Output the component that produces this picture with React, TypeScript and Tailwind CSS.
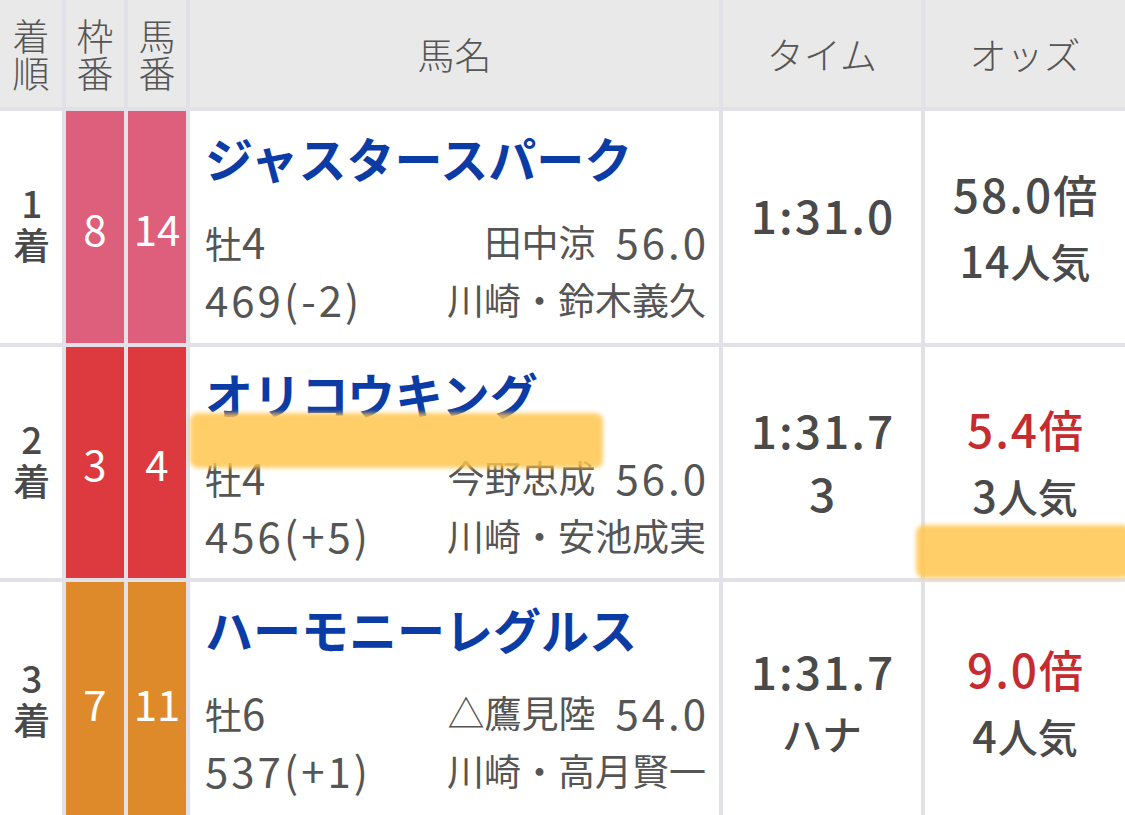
import React from "react";

interface RaceRow {
  rank: string;
  waku: string;
  uma: string;
  frame: string;
  name: string;
  sex: string;
  jockey: string;
  kinryo: string;
  weight: string;
  trainer: string;
  time: string;
  diff: string;
  odds: string;
  pop: string;
  hot: boolean;
}

const rows: RaceRow[] = [
  {
    rank: "1",
    waku: "8",
    uma: "14",
    frame: "bg-[#dd5f7b]",
    name: "ジャスタースパーク",
    sex: "牡4",
    jockey: "田中涼",
    kinryo: "56.0",
    weight: "469(-2)",
    trainer: "川崎・鈴木義久",
    time: "1:31.0",
    diff: "",
    odds: "58.0倍",
    pop: "14人気",
    hot: false,
  },
  {
    rank: "2",
    waku: "3",
    uma: "4",
    frame: "bg-[#dc3a3e]",
    name: "オリコウキング",
    sex: "牡4",
    jockey: "今野忠成",
    kinryo: "56.0",
    weight: "456(+5)",
    trainer: "川崎・安池成実",
    time: "1:31.7",
    diff: "3",
    odds: "5.4倍",
    pop: "3人気",
    hot: true,
  },
  {
    rank: "3",
    waku: "7",
    uma: "11",
    frame: "bg-[#de8a2b]",
    name: "ハーモニーレグルス",
    sex: "牡6",
    jockey: "△鷹見陸",
    kinryo: "54.0",
    weight: "537(+1)",
    trainer: "川崎・高月賢一",
    time: "1:31.7",
    diff: "ハナ",
    odds: "9.0倍",
    pop: "4人気",
    hot: true,
  },
];

// 数字部分だけ少し大きく・広めに（ヒラギノの数字幅に寄せる）
function Mixed({ text, numClass }: { text: string; numClass: string }) {
  const parts = text.split(/([0-9().:+\-]+)/).filter((p) => p !== "");
  return (
    <>
      {parts.map((p, i) =>
        /^[0-9().:+\-]+$/.test(p) ? (
          <span key={i} className={numClass}>
            {p}
          </span>
        ) : (
          <span key={i}>{p}</span>
        ),
      )}
    </>
  );
}

function HeadCell({ children }: { children: React.ReactNode }) {
  return (
    <div className="bg-[#e9e9e9] flex items-center justify-center text-[37px] leading-[38px] text-[#555] font-light">
      {children}
    </div>
  );
}

export default function App() {
  return (
    <div className="relative w-[1125px] h-[815px] overflow-hidden bg-white font-['Noto_Sans_CJK_JP',sans-serif]">
      <div className="grid grid-cols-[62px_58px_58px_529px_198px_1fr] grid-rows-[107px_232px_231px_240px] gap-[4px] bg-[#e2e1e7]">
        <HeadCell>
          <span className="[writing-mode:vertical-rl] mt-[3px]">着順</span>
        </HeadCell>
        <HeadCell>
          <span className="[writing-mode:vertical-rl] mt-[3px]">枠番</span>
        </HeadCell>
        <HeadCell>
          <span className="[writing-mode:vertical-rl] mt-[3px]">馬番</span>
        </HeadCell>
        <HeadCell>馬名</HeadCell>
        <HeadCell>タイム</HeadCell>
        <HeadCell>オッズ</HeadCell>

        {rows.map((r) => (
          <React.Fragment key={r.rank}>
            <div className="bg-white flex items-center justify-center text-[37px] font-medium text-[#4a4a4a]">
              <span className="[writing-mode:vertical-rl] [text-orientation:upright] tracking-[5px]">
                {r.rank}着
              </span>
            </div>
            <div className={`${r.frame} flex items-center justify-center text-[42px] text-white`}>
              {r.waku}
            </div>
            <div className={`${r.frame} flex items-center justify-center text-[42px] text-white`}>
              {r.uma}
            </div>
            <div className="bg-white pt-[18px] pl-[15px] pr-[13px]">
              <div className="text-[48px] leading-[56px] font-bold text-[#0b3ca6] whitespace-nowrap">
                {r.name}
              </div>
              <div className="mt-[28px] text-[37px] leading-[56px] text-[#555]">
                <div className="flex justify-between">
                  <span>
                    <Mixed text={r.sex} numClass="text-[42px] tracking-[3px]" />
                  </span>
                  <span className="-mr-[3px] flex gap-[20px]">
                    <span>{r.jockey}</span>
                    <span className="text-[42px] tracking-[3px]">{r.kinryo}</span>
                  </span>
                </div>
                <div className="flex justify-between">
                  <span>
                    <Mixed text={r.weight} numClass="text-[42px] tracking-[3px]" />
                  </span>
                  <span>{r.trainer}</span>
                </div>
              </div>
            </div>
            <div className="bg-white flex flex-col items-center justify-center leading-[63px] font-medium text-[#4a4a4a]">
              <span className="text-[46px] tracking-[2px] -mr-[2px]">{r.time}</span>
              {r.diff ? (
                <span className="text-[40px]">
                  <Mixed text={r.diff} numClass="text-[46px]" />
                </span>
              ) : (
                <span className="h-[26px]" />
              )}
            </div>
            <div className="bg-white flex flex-col items-center justify-center leading-[65px] font-medium text-[#4a4a4a]">
              <span className={`text-[44px] ${r.hot ? "text-[#c62b30]" : ""}`}>
                <Mixed text={r.odds} numClass="text-[46px] tracking-[2px]" />
              </span>
              <span className="text-[40px]">
                <Mixed text={r.pop} numClass="text-[43px] tracking-[1px]" />
              </span>
            </div>
          </React.Fragment>
        ))}
      </div>

      {/* マーカー */}
      <div className="absolute left-[190px] top-[413px] w-[413px] h-[55px] rounded-[8px] bg-[#ffc54d]/85 blur-[2px]" />
      <div className="absolute left-[916px] top-[525px] w-[215px] h-[53px] rounded-[8px] bg-[#ffc54d]/85 blur-[2px]" />
    </div>
  );
}
